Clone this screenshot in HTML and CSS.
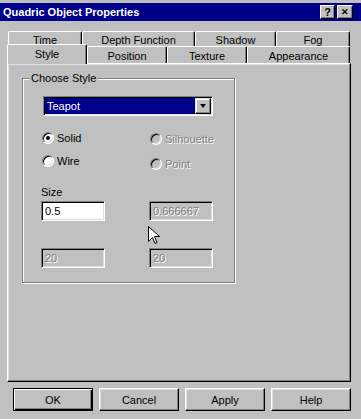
FILE: index.html
```html
<!DOCTYPE html>
<html lang="en">
<head>
  <meta charset="UTF-8">
  <title>Quadric Object Properties</title>
  <link rel="stylesheet" href="styles.css">
</head>
<body>
  <div class="dialog">
    <div class="titlebar">
      <span class="title">Quadric Object Properties</span>
      <div class="caption-btns">
        <span class="cbtn">?</span>
        <span class="cbtn close">&#x2715;</span>
      </div>
    </div>

    <div class="tabs">
      <div class="tab-row back">
        <div class="tab t-time">Time</div>
        <div class="tab t-depth">Depth Function</div>
        <div class="tab t-shadow">Shadow</div>
        <div class="tab t-fog">Fog</div>
      </div>
      <div class="tab-row front">
        <div class="tab t-style active">Style</div>
        <div class="tab t-position">Position</div>
        <div class="tab t-texture">Texture</div>
        <div class="tab t-appearance">Appearance</div>
      </div>
    </div>

    <div class="panel">
      <fieldset class="group">
        <legend>Choose Style</legend>
        <div class="group-body">
          <div class="combo">
            <span class="combo-value">Teapot</span>
            <span class="combo-btn"><span class="arrow"></span></span>
          </div>

          <div class="options">
            <div class="opt-col">
              <label class="radio"><span class="dot checked"></span>Solid</label>
              <label class="radio"><span class="dot"></span>Wire</label>
            </div>
            <div class="opt-col right">
              <label class="radio disabled"><span class="dot"></span>Silhouette</label>
              <label class="radio disabled"><span class="dot"></span>Point</label>
            </div>
          </div>

          <div class="fields">
            <div class="field">
              <span class="field-label">Size</span>
              <div class="edit">0.5</div>
            </div>
            <div class="field">
              <div class="edit disabled">0.666667</div>
            </div>
          </div>

          <div class="fields lower">
            <div class="field"><div class="edit disabled">20</div></div>
            <div class="field"><div class="edit disabled">20</div></div>
          </div>
        </div>
      </fieldset>
    </div>

    <div class="buttons">
      <div class="btn default">OK</div>
      <div class="btn">Cancel</div>
      <div class="btn">Apply</div>
      <div class="btn">Help</div>
    </div>

    <svg class="cursor" width="12" height="19" viewBox="0 0 12 19">
      <path d="M0.5 0.5 L0.5 15.5 L4.5 11.5 L7 17.5 L9 16.5 L6.5 10.5 L11.5 10.5 Z" fill="#fff" stroke="#000" stroke-width="1"/>
    </svg>
  </div>
</body>
</html>
```

FILE: styles.css
```css
:root {
  --face:    #c0c0c0;
  --light:   #dfdfdf;
  --shadow:  #808080;
  --dark:    #000;
  --hilite:  #fff;
  --caption: #000088;
  --grey-text: #808080;
}
* { box-sizing: border-box; }
html, body { margin: 0; padding: 0; }
body {
  width: 361px; height: 419px; overflow: hidden;
  background: var(--face);
  font-family: "Liberation Sans", Arial, sans-serif;
  font-size: 11px;
  color: #000;
}
.dialog { position: relative; height: 419px; padding-top: 3px; }

/* caption */
.titlebar {
  height: 18px;
  background: var(--caption); color: #fff;
  display: flex; align-items: center; justify-content: space-between;
  padding: 0 8px 0 3px;
  font-weight: bold; font-size: 11px;
}
.caption-btns { display: flex; gap: 2px; }
.cbtn {
  width: 15px; height: 14px;
  background: var(--face); color: #000;
  border: 1px solid; border-color: var(--hilite) var(--dark) var(--dark) var(--hilite);
  box-shadow: inset -1px -1px var(--shadow);
  display: flex; align-items: center; justify-content: center;
  font-size: 11px; font-weight: bold; line-height: 1;
}
.cbtn.close { width: 16px; font-size: 9px; }

/* tabs */
.tabs { margin: 10px 11px 0 7px; }
.tab-row { display: flex; }
.tab-row.back  { height: 15px; margin-left: 1px; }
.tab-row.front { height: 17px; }
.tab {
  background: var(--face);
  border-top: 1px solid var(--hilite);
  border-left: 1px solid var(--hilite);
  border-right: 1px solid var(--dark);
  box-shadow: inset -1px 0 var(--shadow);
  border-radius: 2px 2px 0 0;
  display: flex; align-items: center; justify-content: center;
  padding-top: 1px;
}
.t-time { width: 74px; }
.t-depth { width: 113px; }
.t-shadow { width: 81px; }
.t-fog { width: 74px; }
.t-style { width: 80px; }
.t-position { width: 80px; }
.t-texture { width: 80px; }
.t-appearance { width: 103px; }
.tab.active {
  height: 20px; margin-top: -2px; margin-bottom: -1px;
  position: relative; z-index: 1;
  padding-bottom: 3px;
}

/* property page */
.panel {
  margin: 0 10px 0 7px; height: 319px;
  border: 1px solid; border-color: var(--hilite) var(--dark) var(--dark) var(--hilite);
  box-shadow: inset -1px -1px var(--shadow), inset 1px 1px var(--light);
  padding: 8px 0 0 14px;
}
.group {
  margin: 0; padding: 0;
  width: 213px; height: 211px;
  border: 1px solid var(--shadow);
  box-shadow: inset 1px 1px var(--hilite), 1px 1px var(--hilite);
}
.group legend {
  margin-left: 6px; padding: 0 2px;
  background: var(--face);
  line-height: 13px;
}
.group-body { padding: 11px 0 0 18px; }

.combo {
  margin-left: 2px; width: 170px; height: 20px;
  display: flex;
  border: 1px solid; border-color: var(--shadow) var(--hilite) var(--hilite) var(--shadow);
  box-shadow: inset 1px 1px var(--dark), inset -1px -1px var(--light);
  padding: 1px;
}
.combo-value {
  flex: 1;
  background: var(--caption); color: #fff;
  padding-left: 2px; line-height: 16px;
}
.combo-btn {
  width: 16px;
  background: var(--face);
  border: 1px solid; border-color: var(--light) var(--dark) var(--dark) var(--light);
  box-shadow: inset -1px -1px var(--shadow), inset 1px 1px var(--hilite);
  display: flex; align-items: center; justify-content: center;
}
.arrow {
  width: 0; height: 0;
  border-left: 3.5px solid transparent; border-right: 3.5px solid transparent;
  border-top: 4px solid #000;
}

.options {
  display: grid; grid-template-columns: 108px 1fr;
  margin-top: 14px;
}
.opt-col { display: flex; flex-direction: column; gap: 7px; }
.opt-col.right { padding-top: 1px; gap: 9px; }
.radio { display: flex; align-items: center; gap: 3px; height: 16px; padding-left: 1px; }
.dot {
  width: 12px; height: 12px; border-radius: 50%;
  background: #fff;
  border: 1px solid; border-color: var(--shadow) var(--hilite) var(--hilite) var(--shadow);
  box-shadow: inset 1px 1px var(--dark), inset -1px -1px var(--light);
  display: flex; align-items: center; justify-content: center;
}
.dot.checked::after {
  content: ""; width: 4px; height: 4px; border-radius: 50%; background: #000;
}
.radio.disabled { color: var(--grey-text); text-shadow: 1px 1px var(--hilite); }
.radio.disabled .dot { background: var(--face); }

.fields {
  display: grid; grid-template-columns: 108px 1fr;
  align-items: end; margin-top: 14px;
}
.fields.lower { margin-top: 27px; }
.field-label { display: block; line-height: 13px; margin-bottom: 2px; }
.edit {
  width: 64px; height: 20px;
  background: #fff;
  border: 1px solid; border-color: var(--shadow) var(--hilite) var(--hilite) var(--shadow);
  box-shadow: inset 1px 1px var(--dark), inset -1px -1px var(--light);
  padding: 0 3px; line-height: 18px;
}
.edit.disabled {
  background: var(--face); color: var(--grey-text);
  text-shadow: 1px 1px var(--hilite);
}

/* dialog buttons */
.buttons {
  display: flex; gap: 6px;
  margin: 6px 0 0 13px;
}
.btn {
  width: 80px; height: 23px;
  border: 1px solid; border-color: var(--hilite) var(--dark) var(--dark) var(--hilite);
  box-shadow: inset -1px -1px var(--shadow), inset 1px 1px var(--light);
  display: flex; align-items: center; justify-content: center;
}
.btn.default {
  border-color: var(--dark);
  box-shadow: inset 1px 1px var(--hilite), inset -1px -1px var(--dark), inset -2px -2px var(--shadow);
}

.cursor { position: absolute; left: 148px; top: 226px; }
```
